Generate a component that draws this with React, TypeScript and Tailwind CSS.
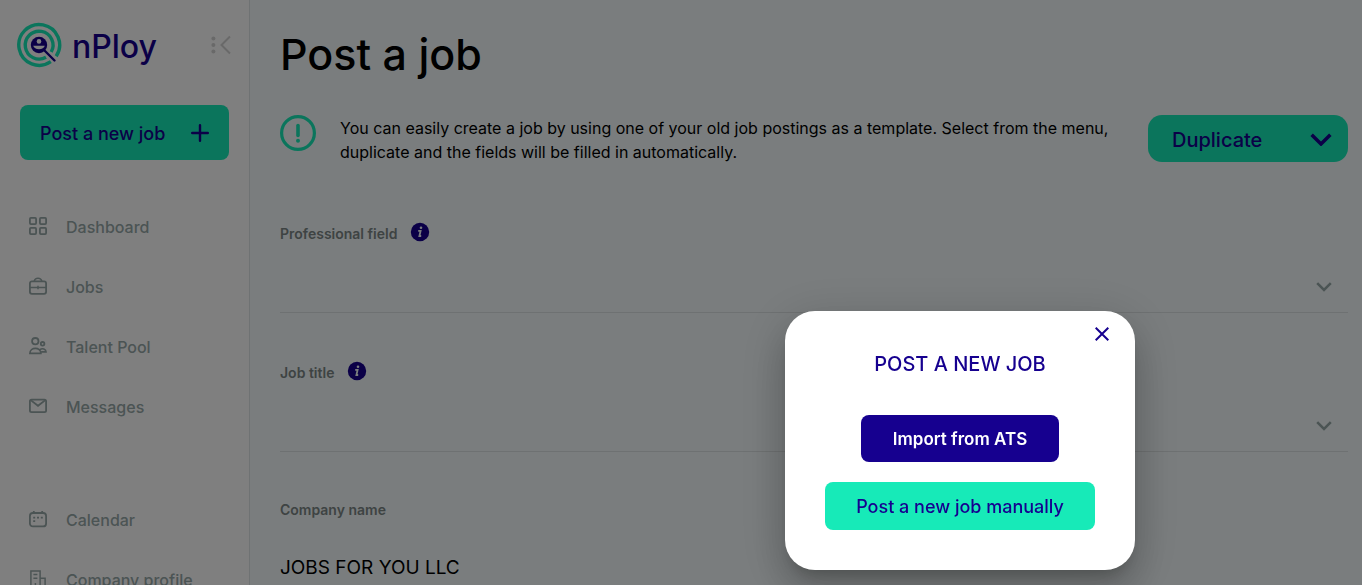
import type { ReactNode } from "react";

function Logo() {
  return (
    <svg width="46" height="46" viewBox="0 0 46 46" fill="none" aria-hidden="true">
      <path d="M40.2 34.2A20.4 20.4 0 1 0 34.8 39.7" stroke="#17eab8" strokeWidth="3.4" />
      <path d="M35.2 30A13.9 13.9 0 1 0 30 35.2" stroke="#17eab8" strokeWidth="3.4" />
      <path d="M28.5 28.5L38.5 38.5" stroke="#16008f" strokeWidth="2.4" strokeLinecap="round" />
      <circle cx="23" cy="23" r="8.2" fill="#16008f" />
      <circle cx="23" cy="19.4" r="2.3" fill="#fff" />
      <path d="M17.2 23.8h11.6a6 4.6 0 0 1-11.6 0z" fill="#fff" />
    </svg>
  );
}

function Icon({ children }: { children: ReactNode }) {
  return (
    <svg width="18" height="18" viewBox="0 0 18 18" fill="none" stroke="currentColor" strokeWidth="1.8" aria-hidden="true">
      {children}
    </svg>
  );
}

const mainLinks = [
  {
    label: "Dashboard",
    icon: (
      <Icon>
        <rect x="0.9" y="0.9" width="6.2" height="6.2" rx="1" />
        <rect x="10.9" y="0.9" width="6.2" height="6.2" rx="1" />
        <rect x="0.9" y="10.9" width="6.2" height="6.2" rx="1" />
        <rect x="10.9" y="10.9" width="6.2" height="6.2" rx="1" />
      </Icon>
    ),
  },
  {
    label: "Jobs",
    icon: (
      <Icon>
        <rect x="0.9" y="4.4" width="16.2" height="12.4" rx="2" />
        <path d="M5.2 4.2C6 .3 12 .3 12.8 4.2M1 10.5h16M9 8.8v3.4" strokeWidth="1.5" />
      </Icon>
    ),
  },
  {
    label: "Talent Pool",
    icon: (
      <Icon>
        <circle cx="6.3" cy="4.2" r="3.2" />
        <circle cx="13.6" cy="6.8" r="1.8" />
        <path d="M.9 16.4c0-6.6 11-6.6 11 0zM11 12.6c2.4-1.8 6-.4 6 2.2h-4.6" strokeWidth="1.7" />
      </Icon>
    ),
  },
  {
    label: "Messages",
    icon: (
      <Icon>
        <rect x="0.9" y="2.6" width="16.2" height="12.6" rx="1.6" />
        <path d="M2 3.4l7 5.4 7-5.4" />
      </Icon>
    ),
  },
];

const companyLinks = [
  {
    label: "Calendar",
    icon: (
      <Icon>
        <rect x="0.9" y="3" width="16.2" height="13.4" rx="3" />
        <path d="M4.8 1v2M13.2 1v2" />
        <path d="M4.2 7.6h2M8 7.6h2M11.8 7.6h2M4.2 11.2h2" />
      </Icon>
    ),
  },
  {
    label: "Company profile",
    icon: (
      <Icon>
        <path d="M1.9 18V.9h9.2V18M11.1 8.2h5v9.8M4.4 4.4h4M4.4 8.2h4M6.4 13v5" strokeWidth="1.5" />
      </Icon>
    ),
  },
];

function NavLinks({ links }: { links: typeof mainLinks }) {
  return (
    <ul>
      {links.map((link) => (
        <li key={link.label}>
          <a href="#" className="flex h-[60px] items-center gap-[19px] pl-[29px] font-medium text-[#97a8a8]">
            {link.icon}
            <span className="pt-0.5">{link.label}</span>
          </a>
        </li>
      ))}
    </ul>
  );
}

function InfoBadge() {
  return (
    <svg width="20" height="20" viewBox="0 0 20 20" aria-hidden="true">
      <circle cx="10" cy="10" r="9.2" fill="#16008f" />
      <circle cx="11" cy="5.7" r="1.3" fill="#f4fbfc" />
      <path d="M8.2 8.9h2.4L9.4 14h1.8" fill="none" stroke="#f4fbfc" strokeWidth="1.8" />
    </svg>
  );
}

function Chevron({ width, stroke }: { width: number; stroke: number }) {
  return (
    <svg width={width} height={width * 0.6} viewBox="0 0 20 12" fill="none" aria-hidden="true">
      <path d="M1.5 1.5L10 10l8.5-8.5" stroke="currentColor" strokeWidth={stroke} />
    </svg>
  );
}

function SelectField({ id, label }: { id: string; label: string }) {
  return (
    <div>
      <div className="flex h-6 items-center gap-[13px]">
        <label htmlFor={id} className="pt-1 text-sm font-semibold text-[#7d8787]">{label}</label>
        <InfoBadge />
      </div>
      <div className="relative border-b border-[#dde3e4]">
        <select id={id} className="block h-[68px] w-full appearance-none bg-transparent text-xl" defaultValue="">
          <option value="" />
        </select>
        <span className="pointer-events-none absolute right-4 bottom-5 text-[#97a8a8]">
          <Chevron width={16} stroke={3.2} />
        </span>
      </div>
    </div>
  );
}

function PostJobDialog() {
  return (
    <div className="fixed inset-0 flex items-end justify-end bg-black/50 pr-[227px] pb-[15px]">
      <div
        role="dialog"
        aria-labelledby="dialog-title"
        className="flex w-[350px] flex-col items-center rounded-[30px] bg-white pt-4 pb-10 text-[#16008f] shadow-[0_11px_15px_-7px_rgba(0,0,0,0.2),0_24px_38px_3px_rgba(0,0,0,0.14),0_9px_46px_8px_rgba(0,0,0,0.12)]"
      >
        <button aria-label="Close" className="mr-[26px] self-end">
          <svg width="14" height="14" viewBox="0 0 14 14" fill="none" stroke="currentColor" strokeWidth="2" aria-hidden="true">
            <path d="M.7.7l12.6 12.6M13.3.7L.7 13.3" />
          </svg>
        </button>
        <h2 id="dialog-title" className="mt-[9px] text-xl leading-7 font-medium">POST A NEW JOB</h2>
        <button className="mt-[37px] h-[47px] w-[198px] rounded-lg bg-[#16008f] pt-0.5 text-[17px] font-semibold text-white">
          Import from ATS
        </button>
        <button className="mt-5 h-12 w-[270px] rounded-lg bg-[#17eab8] pt-0.5 text-lg font-medium">
          Post a new job manually
        </button>
      </div>
    </div>
  );
}

export default function App() {
  return (
    <div className="flex h-screen overflow-hidden bg-[#f4fbfc] font-['Inter',sans-serif] text-base text-black">
      <aside className="w-[250px] shrink-0 overflow-hidden border-r border-[#dfe5e6] bg-white">
        <div className="flex items-center pt-[22px] pr-[17px] pl-4">
          <Logo />
          <span className="ml-2.5 pt-1 text-[32px] leading-[42px] font-medium text-[#16008f]">nPloy</span>
          <button aria-label="Collapse menu" className="ml-auto text-[#d2d2d2]">
            <svg width="22" height="20" viewBox="0 0 22 20" fill="none" aria-hidden="true">
              <g fill="currentColor">
                <circle cx="3.4" cy="3.4" r="2" />
                <circle cx="3.4" cy="10" r="2" />
                <circle cx="3.4" cy="16.6" r="2" />
              </g>
              <path d="M20 1.5L11.5 10l8.5 8.5" stroke="currentColor" strokeWidth="2" />
            </svg>
          </button>
        </div>
        <div className="px-5 pt-[37px]">
          <button className="flex h-[55px] w-full items-center justify-between rounded-lg bg-[#17eab8] px-5 text-lg font-medium text-[#16008f]">
            <span className="pt-0.5">Post a new job</span>
            <svg width="18" height="18" viewBox="0 0 18 18" stroke="currentColor" strokeWidth="2.4" strokeLinecap="round" aria-hidden="true">
              <path d="M9 1.2v15.6M1.2 9h15.6" />
            </svg>
          </button>
        </div>
        <nav className="flex flex-col gap-[53px] pt-9">
          <NavLinks links={mainLinks} />
          <NavLinks links={companyLinks} />
        </nav>
      </aside>

      <main className="min-w-0 flex-1 overflow-hidden pr-[14px] pl-[30px]">
        <h1 className="pt-6 text-[43px] leading-[60px] font-medium">Post a job</h1>

        <div className="mt-[31px] flex items-start">
          <svg width="36" height="36" viewBox="0 0 36 36" fill="none" stroke="#17eab8" className="shrink-0" aria-hidden="true">
            <circle cx="18" cy="18" r="16.4" strokeWidth="3.2" />
            <path d="M18 10.5v10" strokeWidth="3.6" strokeLinecap="round" />
            <circle cx="18" cy="25.8" r="2" fill="#17eab8" stroke="none" />
          </svg>
          <p className="mr-6 ml-6 flex-1 pt-px leading-6">
            You can easily create a job by using one of your old job postings as a template. Select from the menu,
            duplicate and the fields will be filled in automatically.
          </p>
          <button
            aria-haspopup="menu"
            className="flex h-[47px] w-[200px] shrink-0 items-center justify-between rounded-[14px] bg-[#17eab8] pt-0.5 pr-4 pl-6 text-xl font-medium text-[#16008f]"
          >
            Duplicate
            <Chevron width={22} stroke={3.2} />
          </button>
        </div>

        <form className="mt-14 flex flex-col gap-[46px]">
          <SelectField id="field" label="Professional field" />
          <SelectField id="title" label="Job title" />
          <div>
            <label htmlFor="company" className="flex h-6 items-center text-sm font-semibold text-[#7d8787]">
              Company name
            </label>
            <input
              id="company"
              type="text"
              defaultValue="JOBS FOR YOU LLC"
              className="h-[68px] w-full border-b border-[#dde3e4] bg-transparent pt-6 text-[19px]"
            />
          </div>
        </form>
      </main>

      <PostJobDialog />
    </div>
  );
}
